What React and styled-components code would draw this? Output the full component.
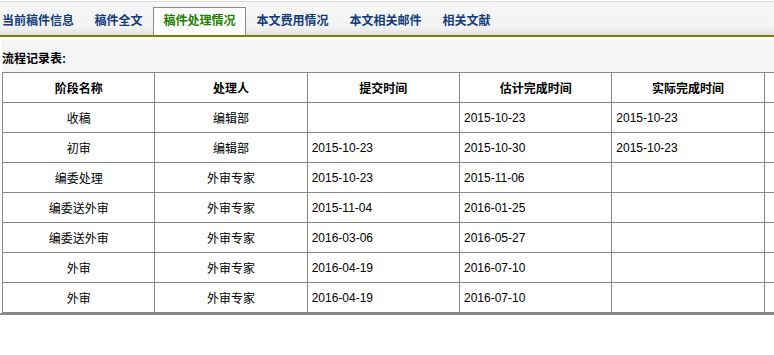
import React from "react";
import styled, { createGlobalStyle } from "styled-components";

const Global = createGlobalStyle`
  html, body {
    margin: 0;
    padding: 0;
    overflow: hidden;
    background: #fff;
    font-family: "Liberation Sans", "Noto Sans CJK SC", Arial, sans-serif;
    font-size: 12px;
    color: #000;
  }
`;

const TabBar = styled.div`
  margin-top: 1px;
  border-top: 1px solid #dcdcdc;
  border-bottom: 2px solid #7d7d00;
  height: 33px;
  display: flex;
  align-items: flex-end;
  background: linear-gradient(#f6f6f6 0%, #f3f3f3 75%, #e2e2e2 100%);
`;

const Tab = styled.div`
  height: 27px;
  line-height: 27px;
  padding: 0 9.5px;
  border: 1px solid ${(p) => (p.$active ? "#8a8a8a" : "transparent")};
  border-bottom: none;
  background: ${(p) => (p.$active ? "#fff" : "transparent")};
  color: ${(p) => (p.$active ? "#1f8000" : "#123d7a")};
  font-weight: bold;
  font-size: 12px;
  white-space: nowrap;
  &:first-child {
    padding-left: 1px;
    padding-right: 9px;
  }
`;

const Panel = styled.div`
  margin-top: 3px;
  border-bottom: 2px solid #888;
  width: 100%;
  overflow: hidden;
`;

const Heading = styled.div`
  margin-left: 2px;
  height: 32px;
  box-sizing: border-box;
  padding-top: 2px;
  display: flex;
  align-items: center;
  background: #f5f5f5;
  font-weight: bold;
  font-size: 12px;
`;

const Table = styled.table`
  margin-left: 2px;
  width: 915px;
  table-layout: fixed;
  border-collapse: collapse;
  background: #fff;
`;

const Th = styled.th`
  border: 1px solid #888;
  height: 29px;
  padding: 0 4px;
  font-weight: bold;
  font-size: 12px;
  text-align: center;
`;

const Td = styled.td`
  border: 1px solid #888;
  height: 29px;
  padding: 0 4px;
  font-size: 12px;
  text-align: ${(p) => (p.$center ? "center" : "left")};
  white-space: nowrap;
`;

const headers = ["阶段名称", "处理人", "提交时间", "估计完成时间", "实际完成时间", ""];

const rows = [
  ["收稿", "编辑部", "", "2015-10-23", "2015-10-23"],
  ["初审", "编辑部", "2015-10-23", "2015-10-30", "2015-10-23"],
  ["编委处理", "外审专家", "2015-10-23", "2015-11-06", ""],
  ["编委送外审", "外审专家", "2015-11-04", "2016-01-25", ""],
  ["编委送外审", "外审专家", "2016-03-06", "2016-05-27", ""],
  ["外审", "外审专家", "2016-04-19", "2016-07-10", ""],
  ["外审", "外审专家", "2016-04-19", "2016-07-10", ""],
];

const tabs = ["当前稿件信息", "稿件全文", "稿件处理情况", "本文费用情况", "本文相关邮件", "相关文献"];

export default function App() {
  return (
    <>
      <Global />
      <TabBar>
        {tabs.map((t, i) => (
          <Tab key={t} $active={i === 2}>
            {t}
          </Tab>
        ))}
      </TabBar>
      <Panel>
        <Heading>流程记录表:</Heading>
        <Table>
          <thead>
            <tr>
              {headers.map((h, i) => (
                <Th key={i}>{h}</Th>
              ))}
            </tr>
          </thead>
          <tbody>
            {rows.map((r, i) => (
              <tr key={i}>
                <Td $center>{r[0]}</Td>
                <Td $center>{r[1]}</Td>
                <Td>{r[2]}</Td>
                <Td>{r[3]}</Td>
                <Td>{r[4]}</Td>
                <Td></Td>
              </tr>
            ))}
          </tbody>
        </Table>
      </Panel>
    </>
  );
}
